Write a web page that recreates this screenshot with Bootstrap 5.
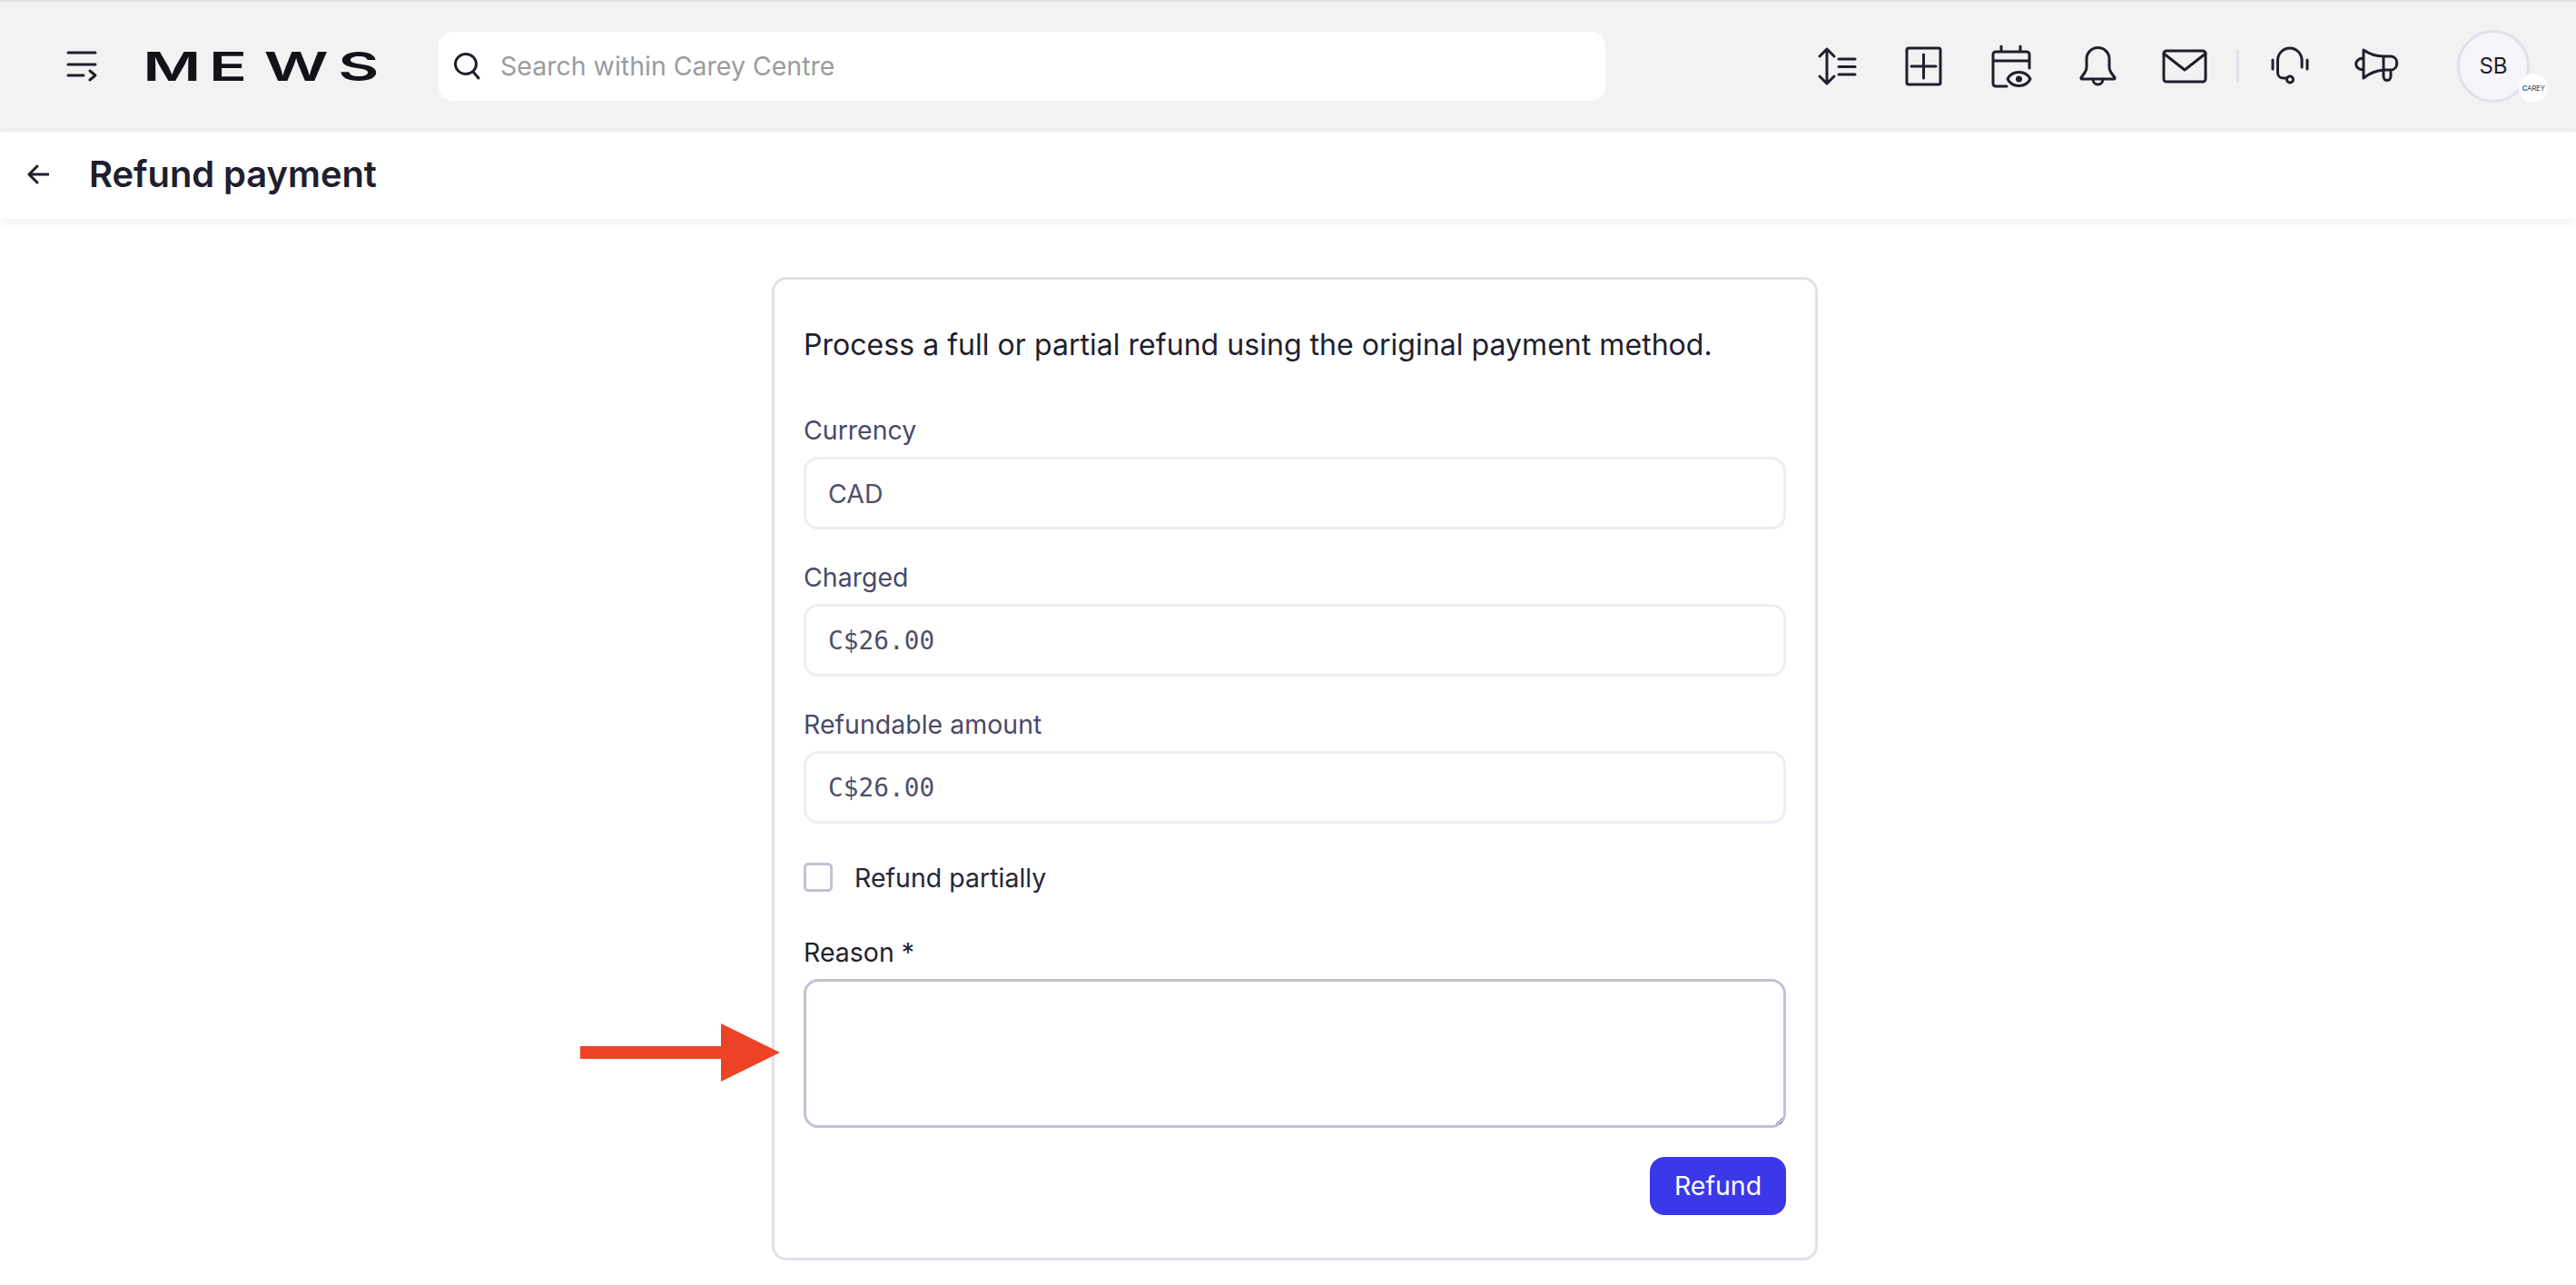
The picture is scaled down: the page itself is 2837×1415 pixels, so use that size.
<!DOCTYPE html>
<html lang="en"><head><meta charset="utf-8"><title>Refund payment</title>
<link href="https://cdn.jsdelivr.net/npm/bootstrap@5.3.0/dist/css/bootstrap.min.css" rel="stylesheet">
<style>
html,body{height:100%}
body{font-family:Inter,"Liberation Sans",sans-serif;background:#fff;color:#1f1f2d;font-size:28.5px;overflow:hidden}
.topbar{height:145px;background:#f2f2f2;border-top:2px solid #e3e3e3;padding-left:74px;padding-bottom:2px}
.topbar svg{display:block;flex:none;overflow:visible}
.ic{fill:none;stroke:#1f1f2d;stroke-width:3;stroke-linecap:round;stroke-linejoin:round}
.menu-ic{margin-right:56px}
.logo-mark{margin-right:67px}
.logo-mark text{font-family:Inter,sans-serif;font-weight:600;font-size:44px;fill:#121218}
.searchbox{width:1285px;height:76px;background:#fff;border-radius:16px;padding-left:17px;margin-right:233px}
.searchbox input{border:0;outline:0;background:transparent;font-size:28.5px;padding:2px 0 0;margin-left:21px;flex:1;color:#1f1f2d}
.searchbox input::placeholder{color:#9b9b9f;opacity:1}
.avatar-disc{width:80px;height:80px;border:3px solid #e1e0ec;border-radius:50%;background:#f5f5fa;font-size:24px;position:relative}
.org-disc{position:absolute;left:65px;top:45px;width:32px;height:32px;border-radius:50%;background:#fff;font-size:8px;color:#444;letter-spacing:-.4px}
.org-disc b{color:#3b78b8;font-weight:700}
.sep-line{width:3px;height:36px;background:#e1e0ec}
.subbar{height:96px;background:#fff;box-shadow:0 2px 10px rgba(30,30,60,.09);padding-left:30px;padding-bottom:2px;position:relative}
.page-title{font-size:40px;font-weight:600;margin:0 0 0 44px;line-height:1;color:#1f1f2d;letter-spacing:-.1px}
.main-area{padding-top:64px;padding-left:15px}
.refund-panel{width:1152px;height:1083px;border:3px solid #e1e0ec;border-radius:16px;padding:51px 32px 33px;position:relative;background:#fff}
.intro{font-size:32.1px;line-height:42px;margin:0 0 54px;color:#1f1f2d}
.fld-label{display:block;font-size:28.5px;line-height:38px;margin-bottom:10px;color:#4a4a68}
.fld-label.strong-label{color:#1f1f2d;margin-bottom:10px}
.refund-panel .form-control{height:80px;border:3px solid #eeedf5;border-radius:16px;font-size:28.5px;padding:0 24px;color:#4f4f6a;box-shadow:none;background:#fff}
.refund-panel textarea.form-control{height:164px;border-color:#c3c1d6;padding:15px 24px;resize:both;color:#1f1f2d}
.fld{margin-bottom:34px}
.refund-panel .monoval{font-family:"DejaVu Sans Mono","Liberation Mono",monospace;font-size:27.8px}
.refund-panel .form-check-input{width:32px;height:32px;border:3px solid #c3c1d6;border-radius:5px;margin:0;float:none;background-color:#fff;flex:none}
.chk-row{height:32px;margin:43px 0 48px;padding:0;gap:24px}
.chk-row label{color:#26263a;font-size:28.5px;padding-top:2px}
.refund-btn{background:#3a38e8;border:0;border-radius:16px;color:#fff;font-size:28.5px;height:64px;width:150px;padding:0;margin-top:32px}
.refund-btn:hover{background:#3a38e8;color:#fff}
.callout{position:absolute;left:-214px;top:819px;display:block}
</style></head>
<body>
<header class="topbar d-flex align-items-center">
  <svg class="menu-ic ic" width="32" height="32" viewBox="0 0 32 32"><path d="M1 2H31M1 15H31M1 27H18M25 22l6 5-6 5" transform="translate(0,-1)"/></svg>
  <svg class="logo-mark" width="254" height="44" viewBox="0 0 254 44"><text transform="scale(1.58,1)" x="-3 43 81.500 133" y="38">MEWS</text></svg>
  <div class="searchbox d-flex align-items-center">
    <svg class="ic" width="30" height="30" viewBox="0 0 30 30"><ellipse cx="13" cy="12.5" rx="11.5" ry="11"/><path d="M21 21l6 7"/></svg>
    <input type="text" placeholder="Search within Carey Centre" aria-label="Search">
  </div>
  <div class="d-flex align-items-center flex-grow-1">
    <svg class="ic" width="44" height="44" viewBox="0 0 44 44"><path d="M11 3V41M3 11l8-8 8 8M3 33l8 8 8-8M24 14H42M24 22.500H42M24 31H42"/></svg>
    <svg class="ic" style="margin-left:53px" width="42" height="44" viewBox="0 0 42 44"><rect x="2" y="2" width="37" height="40" rx="2"/><path d="M20.500 9V35M7 22H34"/></svg>
    <svg class="ic" style="margin-left:53px" width="46" height="48" viewBox="0 0 46 48"><path d="M2 43V11a3 3 0 0 1 3-3H39a3 3 0 0 1 3 3V26M2 18H42M11 2V8M32 2V8M2 43a3 3 0 0 0 3 3H17"/><path d="M18 38c5-10 20-10 25 0-5 10-20 10-25 0z"/><circle cx="30.500" cy="38" r="2" fill="#1f1f2d"/></svg>
    <svg class="ic" style="margin-left:51px" width="42" height="44" viewBox="0 0 42 44"><path d="M8 14a12.500 12.500 0 0 1 25 0V23c0 3 1 4 2 6l4 5.500a1 1 0 0 1-1 1.500H3a1 1 0 0 1-1-1.500l4-5.500c1-2 2-3 2-6Z"/><path d="M15 36c0 8 11 8 11 0"/></svg>
    <svg class="ic" style="margin-left:49px" width="50" height="38" viewBox="0 0 50 38"><rect x="2" y="2" width="46" height="34" rx="3"/><path d="M2 5L25 23 48 5"/></svg>
    <div class="sep-line" style="margin-left:32px"></div>
    <svg class="ic" style="margin-left:35px" width="44" height="44" viewBox="0 0 44 44"><path d="M7.500 29V15.500a13.300 13.500 0 0 1 26.600 0V23M2 15V25M40 15V25M7.500 29c0 4 3 6 6 6H17"/><circle cx="21" cy="36.500" r="3.500"/></svg>
    <svg class="ic" style="margin-left:48px" width="50" height="40" viewBox="0 0 50 40"><path d="M10 2Q20 9 32 9H40c9 0 9 15 0 15H32Q20 25 10 33ZM10 11c-11 0-11 13 0 13M32 9V24M32 24v7c0 6 8 6 8 0V24"/></svg>
    <div class="avatar-disc d-flex align-items-center justify-content-center" style="margin-left:63px">SB
      <div class="org-disc d-flex align-items-center justify-content-center"><span><b>C</b>AREY</span></div>
    </div>
  </div>
</header>
<div class="subbar d-flex align-items-center">
  <svg class="ic" width="24" height="22" viewBox="0 0 24 22"><path d="M23 11H2M11 2L2 11l9 9"/></svg>
  <h1 class="page-title">Refund payment</h1>
</div>
<main class="main-area d-flex justify-content-center">
  <form class="refund-panel">
    <svg class="callout" width="220" height="64" viewBox="0 0 220 64"><path fill="#ec4225" d="M0 25H155V0L220 32 155 64V39H0Z"/></svg>
    <p class="intro">Process a full or partial refund using the original payment method.</p>
    <div class="fld"><label class="fld-label">Currency</label><input class="form-control" readonly value="CAD"></div>
    <div class="fld"><label class="fld-label">Charged</label><input class="form-control monoval" readonly value="C$26.00"></div>
    <div class="fld"><label class="fld-label">Refundable amount</label><input class="form-control monoval" readonly value="C$26.00"></div>
    <div class="chk-row d-flex align-items-center"><input class="form-check-input" type="checkbox" id="rp"><label for="rp">Refund partially</label></div>
    <label class="fld-label strong-label">Reason *</label>
    <textarea class="form-control"></textarea>
    <div class="d-flex justify-content-end"><button type="button" class="btn refund-btn">Refund</button></div>
  </form>
</main>
<script src="https://cdn.jsdelivr.net/npm/bootstrap@5.3.0/dist/js/bootstrap.bundle.min.js"></script>
</body></html>
